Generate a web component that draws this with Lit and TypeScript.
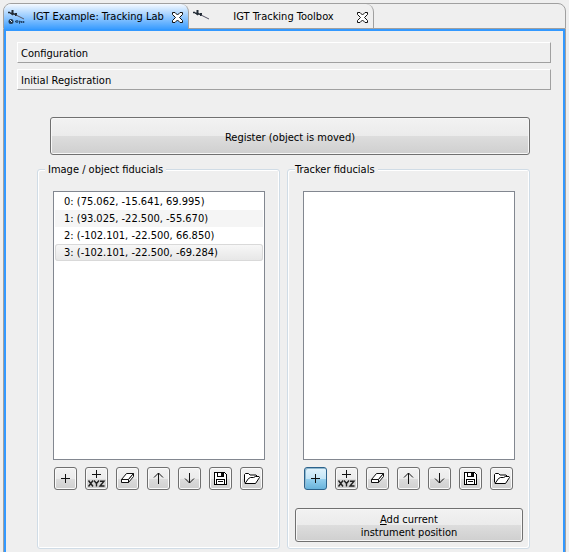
import { LitElement, html, css, svg, nothing } from "lit";
import { customElement, property, state } from "lit/decorators.js";
import { classMap } from "lit/directives/class-map.js";

const glyphs = {
  plus: svg`<path d="M9 5h1v9h-1z M5 9h9v1H5z"/>`,
  xyz: svg`<path d="M9 1h1v8h-1z M5 5h9v1H5z"/><g fill="none" stroke="#222" stroke-width="1.4" shape-rendering="auto"><path d="M1.5 11.500l4.500 6M6 11.500l-4.500 6M7 11.500l2.500 3v3M12 11.500l-2.500 3M13 12.200h4l-4 4.800h4.500"/></g>`,
  erase: svg`<g fill="#fff" stroke="#111" stroke-linejoin="round" shape-rendering="auto"><path d="M8.500 4.500h7l-5 6h-7z"/><path d="M3.500 10.500h7v3h-7z"/><path d="M15.500 4.500v3l-5 6v-3z"/></g>`,
  up: svg`<path d="M9 4h1v11h-1z"/><path d="M5 8.500l4.500-4.500 4.500 4.500" fill="none" stroke="#111" shape-rendering="auto"/>`,
  down: svg`<path d="M9 4h1v10h-1z"/><path d="M5 9.500l4.500 4.500 4.500-4.500" fill="none" stroke="#111" shape-rendering="auto"/>`,
  save: svg`<path d="M3.500 3.500h10l2 2v10h-12z" fill="#fff" stroke="#000"/><path d="M6.500 3.500v4h6v-4 M5.500 15.500v-5h8v5" fill="none" stroke="#000"/><path d="M10 4h2v3h-2z M7 12h5v1H7z"/>`,
  open: svg`<g fill="#fff" stroke="#000" stroke-linejoin="round" shape-rendering="auto"><path d="M2.500 13.500v-8l1-1h3l1.500 1.500h6l1 1v2"/><path d="M3 14.500l3.500-5 2-1h3l2-1h3.500l.5 1-4 6z"/></g>`,
};
type Glyph = keyof typeof glyphs;

const tools: { glyph: Glyph; label: string }[] = [
  { glyph: "plus", label: "Add point" },
  { glyph: "xyz", label: "Edit coordinates" },
  { glyph: "erase", label: "Erase" },
  { glyph: "up", label: "Move up" },
  { glyph: "down", label: "Move down" },
  { glyph: "save", label: "Save" },
  { glyph: "open", label: "Open" },
];

@customElement("point-set")
class PointSet extends LitElement {
  @property({ attribute: false }) points: string[] = [];
  @property() label = "";
  @property() active = "";
  @state() private selected = 3;

  static styles = css`
    :host { display: block; }
    * { box-sizing: border-box; }
    .list {
      list-style: none;
      margin: 0 8px;
      padding: 1px;
      height: 269px;
      background: #fff;
      border: 1px solid #828790;
      overflow: auto;
    }
    .item {
      height: 17px;
      padding: 0 9px;
      line-height: 17px;
      white-space: nowrap;
    }
    .item:nth-child(2n) { background: #f5f5f5; }
    .item.selected {
      border-radius: 3px;
      background: linear-gradient(#f8f8f8, #e6e6e6);
      box-shadow: inset 0 0 0 1px #d9d9d9;
    }
    .tools {
      display: flex;
      gap: 8px;
      margin: 7px 0 0 9px;
    }
    .tool {
      width: 23px;
      height: 23px;
      padding: 1px;
      border: 1px solid #707070;
      border-radius: 3px;
      background: linear-gradient(#f2f2f2, #ebebeb 50%, #dddddd 50%, #cfcfcf);
      box-shadow: inset 0 0 0 1px #fafafa;
    }
    .tool.active {
      border-color: #2c628b;
      background: linear-gradient(#e2f3fc, #c4e5f6 50%, #98d1ef 50%, #68b3db);
      box-shadow: inset 1px 1px 0 #8fb8cf;
    }
    svg { display: block; }
  `;

  render() {
    return html`
      <ul class="list" role="listbox" aria-label=${this.label}>
        ${this.points.map((p, i) => html`<li
            class=${classMap({ item: true, selected: i === this.selected })}
            role="option"
            aria-selected=${i === this.selected}
            @click=${() => (this.selected = i)}
          >${i}: (${p})</li>`)}
      </ul>
      <div class="tools" role="toolbar">
        ${tools.map((t) => html`<button
            class=${classMap({ tool: true, active: t.glyph === this.active })}
            aria-label=${t.label}
          ><svg width="19" height="19" viewBox="0 0 19 19" fill="#111" shape-rendering="crispEdges">${glyphs[t.glyph]}</svg></button>`)}
      </div>
    `;
  }
}

@customElement("app-root")
class AppRoot extends LitElement {
  static styles = css`
    :host {
      display: flex;
      flex-direction: column;
      min-height: 100vh;
      box-sizing: border-box;
      padding: 3px 3px 0;
      background: #efefef;
      color: #000;
      font: 11px/14px "DejaVu Sans Condensed", "Noto Sans", sans-serif;
    }
    * { box-sizing: border-box; }
    button { font: inherit; color: inherit; }
    .tabs {
      display: flex;
      height: 26px;
      border: 1px solid #a0a0a0;
      border-radius: 8px 8px 0 0;
    }
    .tab {
      display: flex;
      align-items: center;
      width: 185px;
      padding: 2px 5px 0 4px;
      border-right: 1px solid #a0a0a0;
      border-radius: 0 8px 0 0;
    }
    .tab.active {
      height: 26px;
      padding-top: 0;
      border-radius: 7px 8px 0 0;
      background: linear-gradient(#f4f9ff, #3399ff);
    }
    .name {
      flex: 1;
      padding: 0;
      border: 0;
      background: none;
      text-align: center;
      white-space: nowrap;
    }
    .close {
      display: block;
      padding: 0;
      border: 0;
      background: none;
    }
    svg { display: block; flex: none; }
    .page {
      flex: 1;
      padding: 11px 12px 3px 11px;
      border: solid #3399ff;
      border-width: 2px 2px 0;
      box-shadow: -1px 0 #a0a0a0, 1px 0 #a0a0a0;
      margin: 0 1px;
    }
    .section {
      display: block;
      width: 100%;
      height: 21px;
      margin-bottom: 6px;
      padding: 2px 3px 0;
      border: 1px solid;
      border-color: #fff #a0a0a0 #a0a0a0 #fff;
      background: none;
      text-align: left;
    }
    .panel { padding: 21px 21px 0 20px; }
    .push {
      display: block;
      width: 100%;
      padding: 2px 8px 0;
      border: 1px solid #707070;
      border-radius: 3px;
      background: linear-gradient(#f2f2f2, #ebebeb 50%, #dddddd 50%, #cfcfcf) padding-box;
      box-shadow: inset 0 0 0 1px #f7f7f7;
      line-height: 13px;
    }
    .register {
      width: calc(100% - 13px);
      height: 38px;
      margin-left: 13px;
    }
    .groups {
      display: grid;
      grid-template-columns: 1fr 1fr;
      gap: 7px;
      margin-top: 6px;
    }
    fieldset {
      min-width: 0;
      margin: 0;
      padding: 14px 6px 6px 7px;
      border: 1px solid #d0dce6;
      border-radius: 3px;
      box-shadow: inset 1px 1px #fff, inset -1px -1px #fff;
    }
    legend {
      padding: 1px 3px 0;
      background: #efefef;
      line-height: 15px;
    }
    .flush { padding-left: 0; }
    .add { height: 34px; margin-top: 18px; }
  `;

  private points = [
    "75.062, -15.641, 69.995",
    "93.025, -22.500, -55.670",
    "-102.101, -22.500, 66.850",
    "-102.101, -22.500, -69.284",
  ];

  private tab(name: string, active: boolean) {
    return html`<div class=${classMap({ tab: true, active })}>
      <svg width="17" height="16" viewBox="0 0 17 16" fill="none" stroke="#222b35">
        <path d="M0 3.500h2M2 4l6 1.500" stroke-width="1.500" />
        <path d="M4.500 1v3M4 6l1-2M8 4v3" stroke-width="2" />
        <path d="M8 6l8 4" stroke="#556" />
        ${active
          ? svg`<circle cx="3" cy="12.500" r="2.500" fill="#24384f" stroke="none" /><path d="M2 11l2 2" stroke="#dbe9f8" /><path d="M7 12.500h1M9 11v3M10.500 12.500h2M11 14h1M13.500 12v2M15.500 12v2" stroke="#24466b" stroke-width="1.500" />`
          : nothing}
      </svg>
      <button class="name" role="tab" aria-selected=${active}>${name}</button>
      <button class="close" aria-label="Close ${name}">
        <svg width="11" height="11" viewBox="0 0 11 11">
          <path d="M.5.500h2.500l2.500 2.500 2.500-2.500h2.500v2l-3 3 3 3v2h-2.500l-2.500-2.500-2.500 2.500h-2.500v-2l3-3-3-3z" fill="#fff" stroke="#111" />
        </svg>
      </button>
    </div>`;
  }

  render() {
    return html`
      <div class="tabs" role="tablist">
        ${this.tab("IGT Example: Tracking Lab", true)}
        ${this.tab("IGT Tracking Toolbox", false)}
      </div>
      <main class="page">
        <button class="section">Configuration</button>
        <button class="section">Initial Registration</button>
        <div class="panel">
          <button class="push register">Register (object is moved)</button>
          <div class="groups">
            <fieldset>
              <legend>Image / object fiducials</legend>
              <point-set label="Image / object fiducials" .points=${this.points}></point-set>
            </fieldset>
            <fieldset>
              <legend class="flush">Tracker fiducials</legend>
              <point-set label="Tracker fiducials" active="plus"></point-set>
              <button class="push add"><u>A</u>dd current<br />instrument position</button>
            </fieldset>
          </div>
        </div>
      </main>
    `;
  }
}
